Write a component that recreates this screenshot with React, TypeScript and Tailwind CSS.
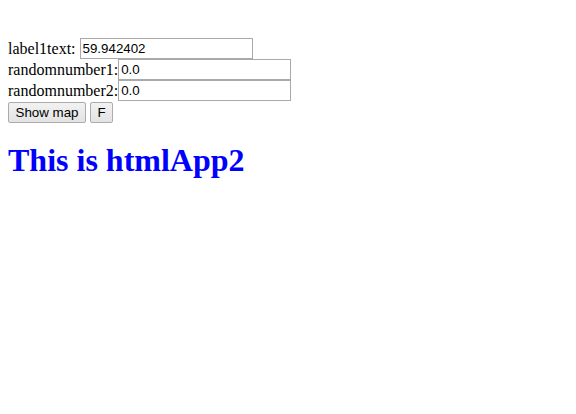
export default function App() {
  const inputCls =
    "w-[173px] h-[21px] border border-[#a9a9a9] bg-white px-[2px] text-[13.33px] text-black outline-none font-['Liberation_Sans',Arial,sans-serif]";
  const btnCls =
    "flex h-[21px] items-center justify-center whitespace-nowrap rounded-[2px] border border-[#acacac] bg-gradient-to-b from-[#f2f2f2] to-[#e3e3e3] px-0 text-[13.33px] text-black font-['Liberation_Sans',Arial,sans-serif]";

  return (
    <div className="min-h-[414px] w-[576px] bg-white px-2 pt-[38px] font-['Liberation_Serif',serif] text-[16px] text-black">
      <div className="flex h-[21px] items-center">
        <span className="whitespace-pre">label1text: </span>
        <input className={inputCls} defaultValue="59.942402" />
      </div>
      <div className="flex h-[21px] items-center">
        <span>randomnumber1:</span>
        <input className={inputCls} defaultValue="0.0" />
      </div>
      <div className="flex h-[21px] items-center">
        <span>randomnumber2:</span>
        <input className={inputCls} defaultValue="0.0" />
      </div>
      <div className="mt-[1px] flex gap-[4px]">
        <button className={`${btnCls} w-[78px]`}>Show map</button>
        <button className={`${btnCls} w-[23px]`}>F</button>
      </div>
      <h1 className="mt-[19px] text-[32px] font-bold leading-[37px] text-[#0000ff]">
        This is htmlApp2
      </h1>
    </div>
  );
}
